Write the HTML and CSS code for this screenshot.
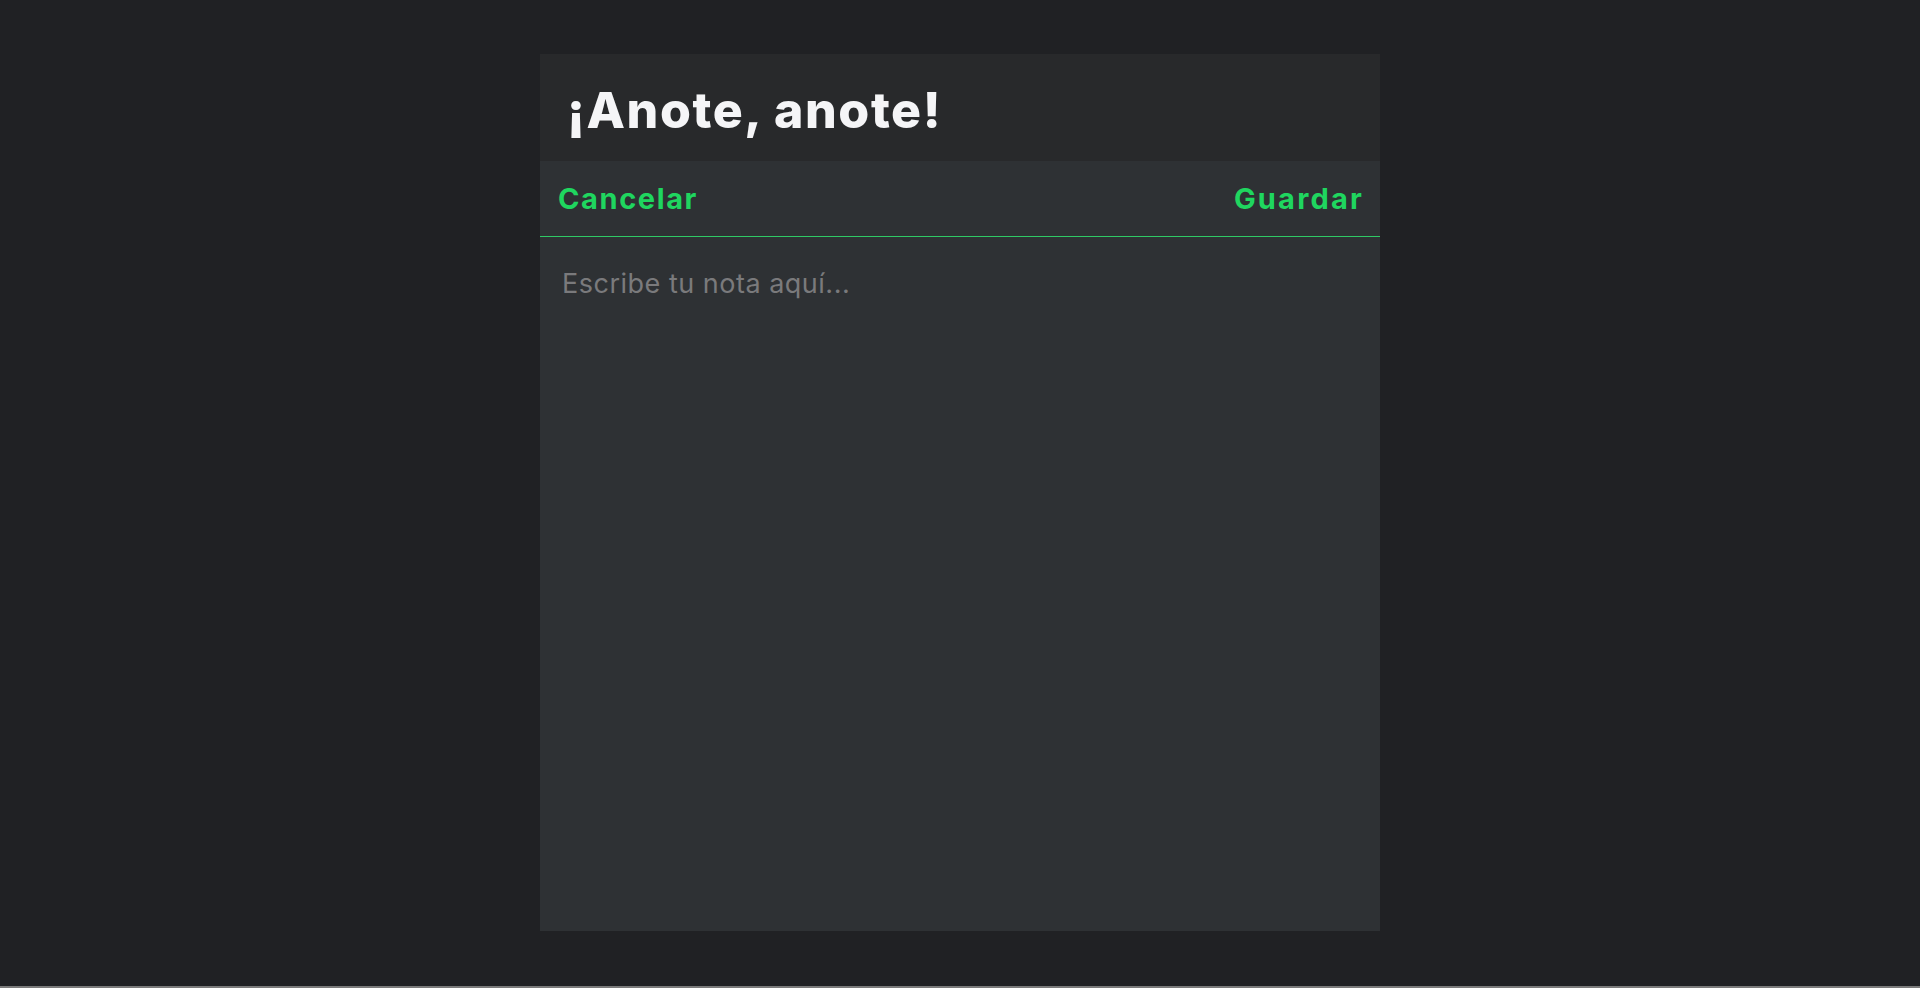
FILE: index.html
```html
<!DOCTYPE html>
<html lang="es">
<head>
<meta charset="utf-8">
<title>¡Anote, anote!</title>
<link rel="stylesheet" href="styles.css">
</head>
<body>
<div class="page">
  <main class="card">
    <header class="card-header">
      <h1 class="title">¡Anote, anote!</h1>
    </header>
    <nav class="toolbar">
      <button class="action">Cancelar</button>
      <button class="action">Guardar</button>
    </nav>
    <textarea class="note" placeholder="Escribe tu nota aquí..."></textarea>
  </main>
</div>
</body>
</html>
```
FILE: styles.css
```css
html {
  background: #7b7b7b;
}
body {
  margin: 0;
  font-family: Inter, "Noto Sans", sans-serif;
}
.page {
  height: 986px;
  background: #202124;
  padding-top: 54px;
  box-sizing: border-box;
  display: flex;
  justify-content: center;
}
.card {
  width: 840px;
  height: 877px;
  display: flex;
  flex-direction: column;
  background: #2e3134;
}
.card-header {
  height: 107px;
  background: #28292b;
  display: flex;
  align-items: center;
  padding: 0 27px;
  box-sizing: border-box;
}
.title {
  margin: 0;
  color: #f5f5f7;
  font-size: 50px;
  font-weight: 800;
  letter-spacing: 1.6px;
  line-height: 1;
  padding-top: 4px;
}
.toolbar {
  height: 76px;
  box-sizing: border-box;
  border-bottom: 1px solid #2fc965;
  display: flex;
  justify-content: space-between;
  align-items: center;
  padding: 0 18px;
}
.action {
  background: none;
  border: none;
  padding: 0;
  color: #1fd65f;
  font-family: Inter, "Noto Sans", sans-serif;
  font-size: 29px;
  font-weight: 700;
  letter-spacing: 1.6px;
  line-height: 1;
  cursor: pointer;
}
.action:last-child {
  letter-spacing: 2.2px;
  margin-right: -2px;
}
.note {
  flex: 1;
  background: transparent;
  border: none;
  outline: none;
  resize: none;
  padding: 30px 22px;
  color: #e8e8e8;
  font-family: Inter, "Noto Sans", sans-serif;
  font-size: 27px;
  font-weight: 400;
  letter-spacing: 0.5px;
}
.note::placeholder {
  color: #7a7a7c;
}
```
